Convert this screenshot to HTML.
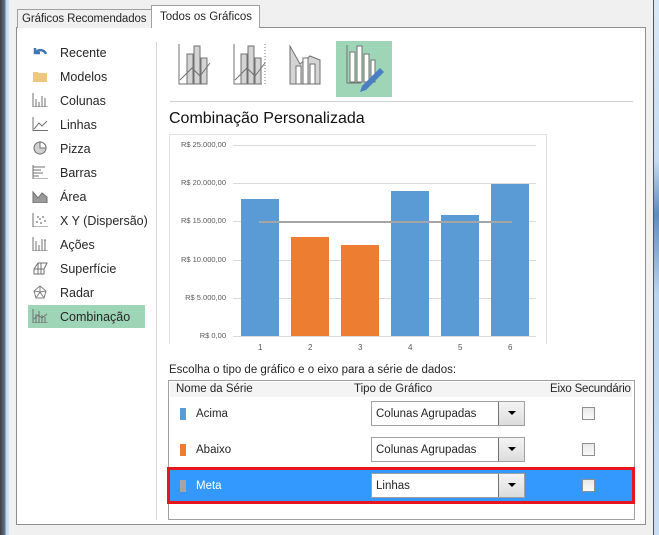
<!DOCTYPE html>
<html><head><meta charset="utf-8"><style>
*{margin:0;padding:0;box-sizing:border-box}
body{width:659px;height:535px;background:#f0f0f0;position:relative;overflow:hidden;font-family:"Liberation Sans","DejaVu Sans",sans-serif;font-size:12px;color:#262626}
.a{position:absolute;white-space:nowrap}
.side{left:0;top:0;width:9px;height:535px;background:linear-gradient(90deg,#3a3f48 0,#6a7480 5px,#bcd7f2 6px,#cfe3f7 8px)}
.rside{left:653px;top:0;width:6px;height:535px;background:linear-gradient(180deg,#d8e8f8 0,#c4dcf3 30%,#5e8cc0 40%,#b8d4f0 55%,#c8def5 100%);border-left:1px solid #555}
.panel{left:16px;top:27px;width:630px;height:498px;background:#fff;border:1px solid #8e8e8e}
.tab1{left:17px;top:9px;width:135px;height:19px;background:#f0f0f0;border:1px solid #a0a0a0;border-bottom:none;font-size:11.5px;padding:3px 0 0 4px;letter-spacing:-0.1px}
.tab2{left:151px;top:5px;width:109px;height:23px;background:#fff;border:1px solid #a0a0a0;border-bottom:none;padding:5px 0 0 8px;font-size:11.5px}
.item{left:28px;width:117px;height:23px;padding:5px 0 0 32px;font-size:12.5px}
.item svg{position:absolute;left:4px;top:4px}
.sel{background:#9fd5b7}
.lab{font-size:7.5px;color:#595959;text-align:right;width:60px;left:166px}
.grid{left:233px;width:303px;height:1px;background:#d9d9d9}
.bar{width:38px}
.bl{background:#5b9bd5}.or{background:#ed7d31}
.xl{font-size:8px;color:#595959;top:343px}
.t{font-size:11.5px}
.dd{width:154px;height:25px;border:1px solid #a0a0a0;background:#fff;padding:6px 0 0 4px;font-size:11.5px;left:371px}
.dd b{position:absolute;right:0;top:0;width:26px;height:23px;border-left:1px solid #707070;background:linear-gradient(#f4f4f4,#dcdcdc)}
.dd b:after{content:"";position:absolute;left:9px;top:9px;border:4px solid transparent;border-top:4px solid #000}
.cb{left:582px;width:13px;height:13px;border:1px solid #8e8f8f;background:linear-gradient(#e8e8e8,#fafafa)}
</style></head><body>
<div class="a side"></div>
<div class="a rside"></div>
<div class="a panel"></div>
<div class="a tab1">Gráficos Recomendados</div>
<div class="a tab2">Todos os Gráficos</div>

<div class="a item" style="top:41px"><svg width="16" height="14"><path d="M3 3v5h5" fill="none" stroke="#3f76b5" stroke-width="2.5"/><path d="M4 7a6 6 0 0 1 10 2" fill="none" stroke="#3f76b5" stroke-width="2.5"/></svg>Recente</div>
<div class="a item" style="top:65px"><svg width="16" height="14"><path d="M1 3h5l1 1h8v9H1z" fill="#f0c77e"/></svg>Modelos</div>
<div class="a item" style="top:89px"><svg width="16" height="14" fill="none" stroke="#707070"><path d="M1 0v14h15M4 6v8M7 9v5M10 3v11M13 5v9"/></svg>Colunas</div>
<div class="a item" style="top:113px"><svg width="16" height="14" fill="none" stroke="#707070"><path d="M1 0v13.5h15M2 12l5-6 3 3 5-5"/></svg>Linhas</div>
<div class="a item" style="top:137px"><svg width="16" height="14"><circle cx="8" cy="7" r="6" fill="#d0d0d0" stroke="#707070"/><path d="M8 7V1a6 6 0 0 1 6 6z" fill="#fff" stroke="#707070"/></svg>Pizza</div>
<div class="a item" style="top:161px"><svg width="16" height="14" fill="none" stroke="#707070"><path d="M1 0v14h15M1 2h12M1 5h8M1 8h10M1 11h6"/></svg>Barras</div>
<div class="a item" style="top:185px"><svg width="16" height="14"><path d="M1 3l5 6 4-5 5 4v6H1z" fill="#9a9a9a" stroke="#707070"/></svg>Área</div>
<div class="a item" style="top:209px"><svg width="16" height="14" fill="#909090"><path d="M1 0v14h15" fill="none" stroke="#707070"/><circle cx="5" cy="9" r="1"/><circle cx="8" cy="6" r="1"/><circle cx="11" cy="4" r="1"/><circle cx="9" cy="10" r="1"/><circle cx="13" cy="8" r="1"/><circle cx="6" cy="4" r="1"/></svg>X Y (Dispersão)</div>
<div class="a item" style="top:233px"><svg width="16" height="14" fill="none" stroke="#707070"><path d="M1 0v14h15M4 4v10M7 8v6M10 2v12M13 3v11M12 3h2"/></svg>Ações</div>
<div class="a item" style="top:257px"><svg width="16" height="14" fill="none" stroke="#707070"><path d="M2 8l4-6h9l-3 6v5H2zM2 8h10M6 2v11M9 2v11"/></svg>Superfície</div>
<div class="a item" style="top:281px"><svg width="16" height="14" fill="none" stroke="#808080"><path d="M8 1l6 5-2 7H4L2 6zM8 1v6M14 6L8 7M12 13L8 7M4 13l4-6M2 6l6 1"/></svg>Radar</div>
<div class="a item sel" style="top:305px"><svg width="16" height="14" fill="none" stroke="#707070"><path d="M1 0v14h15M4 5v9M7 2v12M10 6v12M13 8v6M2 10l4-4 4 3 5-4"/></svg>Combinação</div>
<div class="a" style="left:156px;top:42px;width:1px;height:478px;background:#d6d6d6"></div>

<svg class="a" style="left:170px;top:40px" width="230" height="60">
<g fill="#d4d4d4" stroke="#707070"><rect x="17" y="14" width="6" height="30"/><rect x="24" y="6" width="6" height="38"/><rect x="31" y="18" width="6" height="26"/><path d="M9 4v40h26" fill="none"/><path d="M10 40l12-12 8 8 10-13" fill="none"/>
<rect x="71" y="14" width="6" height="30"/><rect x="78" y="6" width="6" height="38"/><rect x="85" y="18" width="6" height="26"/><path d="M64 4v40h28" fill="none"/><path d="M65 40l12-12 8 8 10-13" fill="none"/><path d="M95 4v40" fill="none" stroke-dasharray="1 2"/>
<path d="M120 6v38h30V20l-10-4-10 8z"/><rect x="126" y="26" width="5" height="18" fill="#fff"/><rect x="133" y="18" width="5" height="26" fill="#fff"/><rect x="140" y="24" width="5" height="20" fill="#fff"/></g>
<rect x="166" y="1" width="56" height="56" fill="#9fd5b7"/>
<g fill="#fff" stroke="#707070"><path d="M177 5v38h14" fill="none"/><rect x="180" y="12" width="5" height="30"/><rect x="187" y="6" width="5" height="36"/><rect x="194" y="14" width="5" height="28"/><rect x="201" y="20" width="4" height="22"/></g>
<path d="M192 46l18-18 4 4-18 18-6 2z" fill="#4a7fc1"/>
</svg>
<div class="a" style="left:170px;top:101px;width:463px;height:1px;background:#cfcfcf"></div>
<div class="a" style="left:169px;top:110px;font-size:16px;color:#111">Combinação Personalizada</div>

<div class="a" style="left:169px;top:134px;width:378px;height:210px;border:1px solid #e0e0e0;border-bottom:none"></div>
<div class="a grid" style="top:145px"></div><div class="a grid" style="top:183px"></div><div class="a grid" style="top:221px"></div><div class="a grid" style="top:260px"></div><div class="a grid" style="top:298px"></div><div class="a grid" style="top:336px"></div>
<div class="a lab" style="top:140px">R$ 25.000,00</div>
<div class="a lab" style="top:178px">R$ 20.000,00</div>
<div class="a lab" style="top:216px">R$ 15.000,00</div>
<div class="a lab" style="top:255px">R$ 10.000,00</div>
<div class="a lab" style="top:293px">R$ 5.000,00</div>
<div class="a lab" style="top:331px">R$ 0,00</div>
<div class="a bar bl" style="left:241px;top:199px;height:137px"></div>
<div class="a bar or" style="left:291px;top:237px;height:99px"></div>
<div class="a bar or" style="left:341px;top:245px;height:91px"></div>
<div class="a bar bl" style="left:391px;top:191px;height:145px"></div>
<div class="a bar bl" style="left:441px;top:215px;height:121px"></div>
<div class="a bar bl" style="left:491px;top:184px;height:152px"></div>
<div class="a" style="left:259px;top:221px;width:253px;height:2px;background:#a5a5a5"></div>
<div class="a xl" style="left:258px">1</div><div class="a xl" style="left:308px">2</div><div class="a xl" style="left:358px">3</div><div class="a xl" style="left:408px">4</div><div class="a xl" style="left:458px">5</div><div class="a xl" style="left:508px">6</div>

<div class="a t" style="left:169px;top:364px">Escolha o tipo de gráfico e o eixo para a série de dados:</div>
<div class="a" style="left:168px;top:380px;width:467px;height:140px;border:1px solid #a0a0a0"></div>
<div class="a" style="left:170px;top:382px;width:462px;height:15px;background:#f4f4f4"></div>
<div class="a t" style="left:176px;top:383px">Nome da Série</div>
<div class="a t" style="left:354px;top:383px">Tipo de Gráfico</div>
<div class="a t" style="left:550px;top:383px;letter-spacing:-0.2px">Eixo Secundário</div>

<div class="a" style="left:180px;top:408px;width:6px;height:12px;background:#5b9bd5"></div>
<div class="a t" style="left:196px;top:408px">Acima</div>
<div class="a dd" style="top:401px">Colunas Agrupadas<b></b></div>
<div class="a cb" style="top:407px"></div>

<div class="a" style="left:180px;top:444px;width:6px;height:12px;background:#ed7d31"></div>
<div class="a t" style="left:196px;top:444px">Abaixo</div>
<div class="a dd" style="top:437px">Colunas Agrupadas<b></b></div>
<div class="a cb" style="top:443px"></div>

<div class="a" style="left:167px;top:467px;width:468px;height:37px;background:#3399ff;border:3px solid #e8141e"></div>
<div class="a" style="left:180px;top:480px;width:6px;height:12px;background:#a5a5a5"></div>
<div class="a t" style="left:196px;top:480px;color:#fff">Meta</div>
<div class="a dd" style="top:473px">Linhas<b></b></div>
<div class="a cb" style="top:479px"></div>
</body></html>
